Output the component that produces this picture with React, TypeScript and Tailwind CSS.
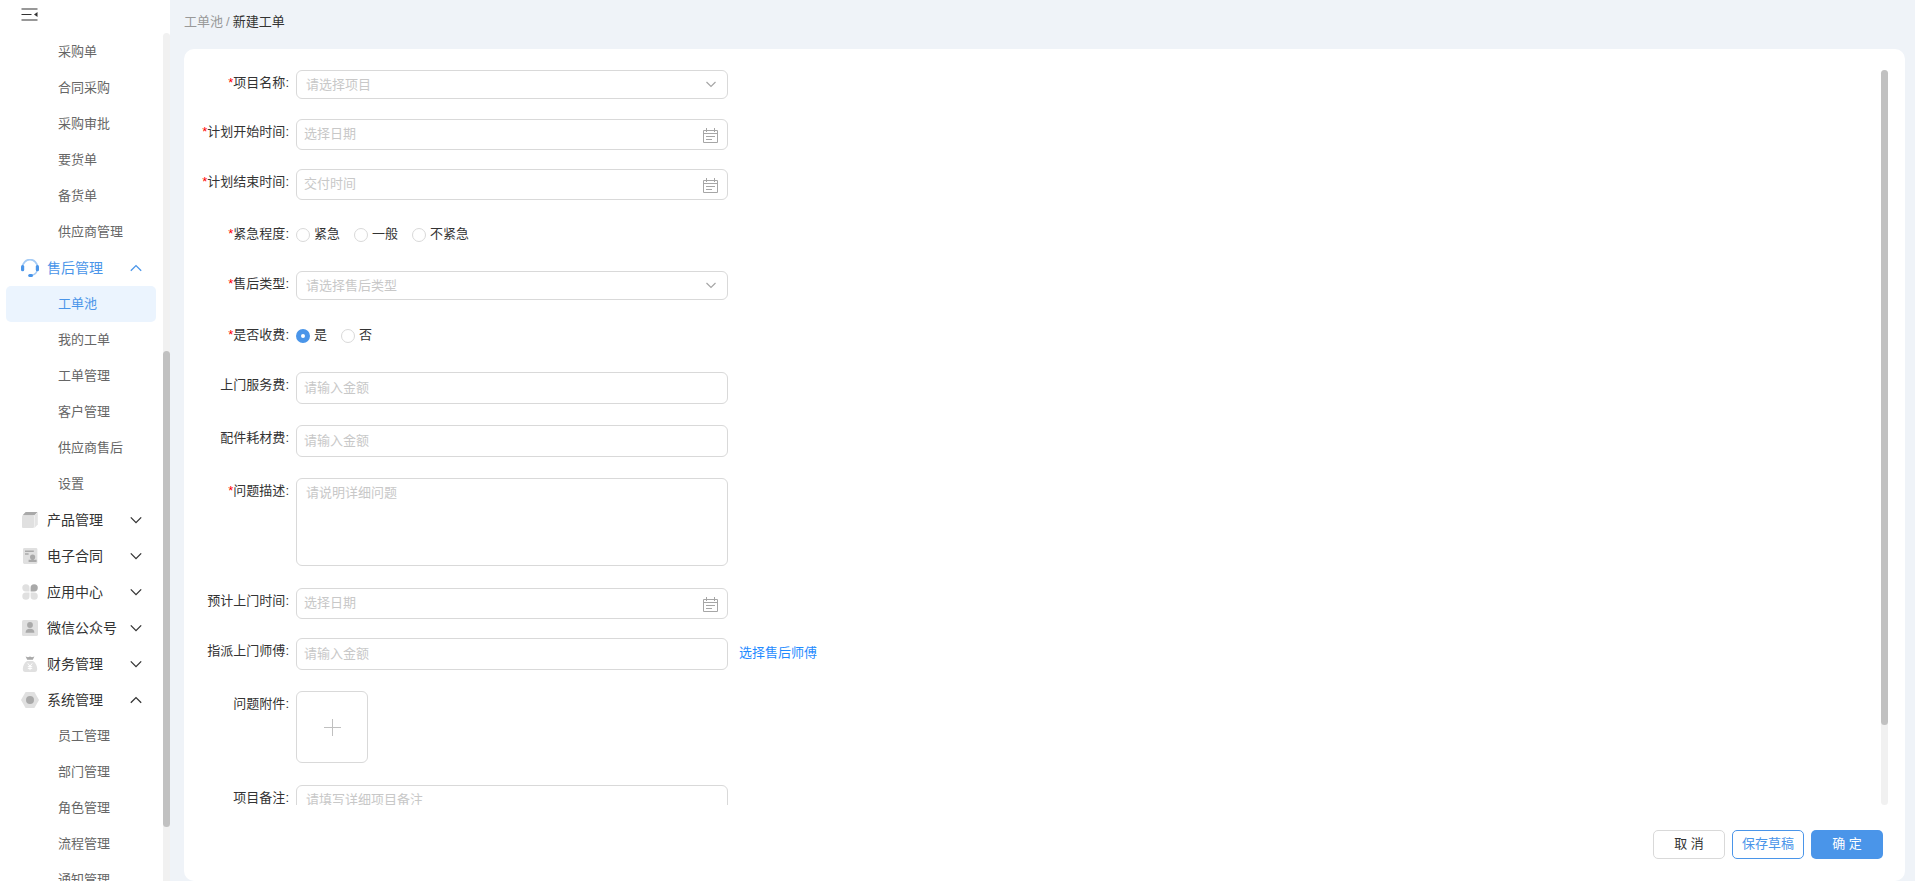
import { useState } from "react";
import type { ReactNode } from "react";

interface MenuGroup {
  name: string;
  icon?: ReactNode;
  open?: boolean;
  active?: boolean;
  children?: string[];
}

// Sidebar icons
const HeadsetIcon = () => (
  <svg width="18" height="18" viewBox="0 0 18 18" fill="none">
    <path d="M1.6 8a7.4 7.4 0 0 1 14.8 0" stroke="#a5cbf5" strokeWidth="1.8" />
    <path d="M16.2 10.5c-.4 3.2-2.6 5.4-5.7 5.9" stroke="#a5cbf5" strokeWidth="1.6" />
    <rect x="0" y="6" width="3.2" height="6.2" rx="1.5" fill="#4a95e9" />
    <rect x="14.8" y="6" width="3.2" height="6.2" rx="1.5" fill="#4a95e9" />
    <rect x="7.2" y="15" width="4.8" height="3" rx="1.5" fill="#4a95e9" />
  </svg>
);

const BoxIcon = () => (
  <svg width="18" height="18" viewBox="0 0 18 18">
    <rect x="1" y="4.6" width="12" height="12.4" rx="1" fill="#e0e0e0" />
    <path d="M13.4 4.6 16.8 1.8V13.6L13.4 17Z" fill="#e4e4e4" />
    <path d="M1.6 4.2 4.6 1h12l-3.2 3.2Z" fill="#a9a9a9" />
  </svg>
);

const ContractIcon = () => (
  <svg width="18" height="18" viewBox="0 0 18 18">
    <rect x="2" y="1" width="14.4" height="16" rx="1.4" fill="#e0e0e0" />
    <path d="M4 4.2h8.8M4 7h3.6" stroke="#a9a9a9" strokeWidth="1.5" />
    <circle cx="11.6" cy="10" r="2.6" fill="#a9a9a9" />
    <path d="M10.4 11h2.4v1.8h2.8V15H7.6v-2.2h2.8Z" fill="#a9a9a9" />
  </svg>
);

const AppsIcon = () => (
  <svg width="18" height="18" viewBox="0 0 18 18" fill="#e0e0e0">
    <path d="M4.9 1.2a3.6 3.6 0 1 0 0 7.2h3.6V4.8a3.6 3.6 0 0 0-3.6-3.6Z" />
    <path d="M13.2 1.2a3.6 3.6 0 1 1 0 7.2H9.6V4.8a3.6 3.6 0 0 1 3.6-3.6Z" fill="#a9a9a9" />
    <path d="M4.9 16.8a3.6 3.6 0 1 1 0-7.2h3.6v3.6a3.6 3.6 0 0 1-3.6 3.6Z" />
    <path d="M13.2 16.8a3.6 3.6 0 1 0 0-7.2H9.6v3.6a3.6 3.6 0 0 0 3.6 3.6Z" />
  </svg>
);

const ContactIcon = () => (
  <svg width="18" height="18" viewBox="0 0 18 18">
    <rect x="1" y="1" width="16" height="16" rx="1.6" fill="#e0e0e0" />
    <circle cx="9" cy="6" r="2.9" fill="#a9a9a9" />
    <path d="M4.6 13.8c0-2.6 1.4-4 4.4-4s4.4 1.4 4.4 4Z" fill="#a9a9a9" />
  </svg>
);

const MoneyIcon = () => (
  <svg width="18" height="18" viewBox="0 0 18 18">
    <path d="M4.6 1.6 7 2.2 9 1.6l2 .6 2.4-.6-1.6 3.2H6.2Z" fill="#a9a9a9" />
    <path d="M6 6h6c2.6 1.8 4.2 5 4.2 8 0 1.8-.8 3-2.4 3H4.2c-1.6 0-2.4-1.2-2.4-3 0-3 1.6-6.2 4.2-8Z" fill="#e0e0e0" />
    <path d="m6.8 8.4 2.2 2.8 2.2-2.8M9 11.2v4M6.8 11.6h4.4M6.8 13.4h4.4" stroke="#fff" fill="none" />
  </svg>
);

const SettingIcon = () => (
  <svg width="18" height="18" viewBox="0 0 18 18">
    <path d="M4.6 1h8.8L18 9l-4.6 8H4.6L0 9Z" fill="#e0e0e0" />
    <circle cx="9" cy="9" r="4" fill="#a9a9a9" />
  </svg>
);

const Chevron = ({ up = false }: { up?: boolean }) => (
  <svg width="12" height="8" viewBox="0 0 12 8" fill="none" stroke="currentColor" strokeWidth="1.3">
    <path d={up ? "M.8 6.8 6 1.6l5.2 5.2" : "M.8 1.4 6 6.6l5.2-5.2"} />
  </svg>
);

const CalendarIcon = () => (
  <svg width="15" height="15" viewBox="0 0 15 15" fill="none" stroke="#a6a6a6">
    <path d="M.5 2.5h14v12H.5zM.5 5.5h14M3.5 0v4M11.5 0v4M3 8.5h9M3 11.5h6" />
  </svg>
);

const menu: MenuGroup[] = [
  { name: "", children: ["采购单", "合同采购", "采购审批", "要货单", "备货单", "供应商管理"] },
  {
    name: "售后管理",
    icon: <HeadsetIcon />,
    open: true,
    active: true,
    children: ["工单池", "我的工单", "工单管理", "客户管理", "供应商售后", "设置"],
  },
  { name: "产品管理", icon: <BoxIcon /> },
  { name: "电子合同", icon: <ContractIcon /> },
  { name: "应用中心", icon: <AppsIcon /> },
  { name: "微信公众号", icon: <ContactIcon /> },
  { name: "财务管理", icon: <MoneyIcon /> },
  {
    name: "系统管理",
    icon: <SettingIcon />,
    open: true,
    children: ["员工管理", "部门管理", "角色管理", "流程管理", "通知管理"],
  },
];

const Sidebar = () => {
  const [current, setCurrent] = useState("工单池");

  return (
    <aside className="flex h-full w-[170px] shrink-0 flex-col bg-white">
      <button type="button" aria-label="收起菜单" className="h-[33px] shrink-0 pl-[21px]">
        <svg width="17" height="13" viewBox="0 0 17 13" className="-mt-1">
          <path d="M.5 1h16M.5 6.5h10M.5 12h16" stroke="#333" strokeWidth="1.2" />
          <path d="M16.5 4v5L13 6.5Z" fill="#333" />
        </svg>
      </button>
      <div className="flex min-h-0 flex-1">
        <nav className="flex-1 overflow-hidden pt-px">
          {menu.map((group) => (
            <div key={group.name}>
              {group.name && (
                <button
                  type="button"
                  className={`flex h-9 w-full items-center pl-[21px] text-sm ${
                    group.active ? "text-[#4a95e9]" : "text-[#333]"
                  }`}
                >
                  {group.icon}
                  <span className="ml-2 w-[83px] text-left whitespace-nowrap">{group.name}</span>
                  <Chevron up={group.open} />
                </button>
              )}
              {group.children?.map((item) => (
                <a
                  key={item}
                  href="#"
                  onClick={() => setCurrent(item)}
                  className={`mr-[7px] ml-1.5 flex h-9 items-center rounded-[5px] pl-[52px] ${
                    current === item ? "bg-[#ebf4fe] text-[#4a95e9]" : "text-[#666]"
                  }`}
                >
                  {item}
                </a>
              ))}
            </div>
          ))}
        </nav>
        {/* Scrollbar */}
        <div className="flex w-[7px] flex-col rounded-t bg-[#f1f1f1]">
          <div className="mt-[318px] h-[476px] rounded bg-[#c1c1c1]" />
        </div>
      </div>
    </aside>
  );
};

type Kind = "select" | "date" | "radio" | "input" | "textarea" | "upload";

interface Field {
  id: string;
  label: string;
  kind: Kind;
  required?: boolean;
  placeholder?: string;
  options?: string[];
  checked?: string;
  link?: string;
}

const fields: Field[] = [
  { id: "project", label: "项目名称", kind: "select", required: true, placeholder: "请选择项目" },
  { id: "start", label: "计划开始时间", kind: "date", required: true, placeholder: "选择日期" },
  { id: "end", label: "计划结束时间", kind: "date", required: true, placeholder: "交付时间" },
  { id: "urgency", label: "紧急程度", kind: "radio", required: true, options: ["紧急", "一般", "不紧急"] },
  { id: "type", label: "售后类型", kind: "select", required: true, placeholder: "请选择售后类型" },
  { id: "charge", label: "是否收费", kind: "radio", required: true, options: ["是", "否"], checked: "是" },
  { id: "serviceFee", label: "上门服务费", kind: "input", placeholder: "请输入金额" },
  { id: "partsFee", label: "配件耗材费", kind: "input", placeholder: "请输入金额" },
  { id: "description", label: "问题描述", kind: "textarea", required: true, placeholder: "请说明详细问题" },
  { id: "visitTime", label: "预计上门时间", kind: "date", placeholder: "选择日期" },
  { id: "worker", label: "指派上门师傅", kind: "input", placeholder: "请输入金额", link: "选择售后师傅" },
  { id: "attachment", label: "问题附件", kind: "upload" },
  { id: "remark", label: "项目备注", kind: "textarea", placeholder: "请填写详细项目备注" },
];

// Spacing under each kind of control
const rowSpace: Record<Kind, string> = {
  select: "pb-5",
  date: "pb-[19px]",
  radio: "pb-[22px]",
  input: "pb-[21px]",
  textarea: "pb-[22px]",
  upload: "pb-[22px]",
};

const box = "block w-full rounded-md border border-[#d9d9d9] bg-white outline-none placeholder:text-[#c8c8c8]";

const Control = ({ field }: { field: Field }) => {
  switch (field.kind) {
    case "select":
      return (
        <div className="relative">
          <select id={field.id} className={`${box} h-[29px] appearance-none px-[9px] text-[#c8c8c8]`}>
            <option>{field.placeholder}</option>
          </select>
          <span className="pointer-events-none absolute inset-y-0 right-3 flex items-center text-[#a6a6a6]">
            <svg width="10" height="7" viewBox="0 0 10 7" fill="none" stroke="currentColor" strokeWidth="1.2">
              <path d="M.5 1 5 5.5 9.5 1" />
            </svg>
          </span>
        </div>
      );
    case "date":
      return (
        <div className="relative">
          <input id={field.id} type="text" placeholder={field.placeholder} className={`${box} h-[31px] px-[7px] pb-0.5`} />
          <span className="pointer-events-none absolute inset-y-0 right-2.5 flex items-center pt-px">
            <CalendarIcon />
          </span>
        </div>
      );
    case "radio":
      return (
        <div className="flex h-[30px] items-center gap-3.5">
          {field.options?.map((option) => (
            <label key={option} className="flex items-center gap-1">
              <input
                type="radio"
                name={field.id}
                defaultChecked={option === field.checked}
                className="mt-0.5 size-3.5 appearance-none rounded-full border border-[#d9d9d9] bg-white checked:border-5 checked:border-[#4a95e9]"
              />
              {option}
            </label>
          ))}
        </div>
      );
    case "textarea":
      return (
        <textarea
          id={field.id}
          placeholder={field.placeholder}
          className={`${box} h-[88px] resize-none px-[9px] py-1`}
        />
      );
    case "upload":
      return (
        <button
          id={field.id}
          type="button"
          aria-label="上传附件"
          className="flex size-[72px] items-center justify-center rounded-md border border-[#d9d9d9]"
        >
          <svg width="17" height="17" viewBox="0 0 17 17" stroke="#c0c0c0">
            <path d="M8.5 0v17M0 8.5h17" />
          </svg>
        </button>
      );
    default:
      return (
        <input id={field.id} type="text" placeholder={field.placeholder} className={`${box} h-8 px-[7px] pb-0.5`} />
      );
  }
};

const FormRow = ({ field }: { field: Field }) => {
  const Label = field.kind === "radio" ? "span" : "label";

  return (
    <div className={`flex items-start ${rowSpace[field.kind]}`}>
      <Label
        {...(field.kind === "radio" ? {} : { htmlFor: field.id })}
        className={`w-[105px] shrink-0 pr-[7px] text-right whitespace-nowrap ${
          field.kind === "radio" ? "leading-[30px]" : "leading-[26px]"
        }`}
      >
        {field.required && <span className="text-[#f00]">*</span>}
        {field.label}:
      </Label>
      <div className="w-[432px]">
        <Control field={field} />
      </div>
      {field.link && (
        <a href="#" className="ml-[11px] leading-[30px] text-[#1f8bff]">
          {field.link}
        </a>
      )}
    </div>
  );
};

export default function App() {
  return (
    <div className="flex h-screen overflow-hidden bg-[#eff3f8] font-['Liberation_Sans','Noto_Sans_CJK_SC',sans-serif] text-[13px] leading-5 text-[#333]">
      <Sidebar />
      <main className="flex min-w-0 flex-1 flex-col pr-2.5 pl-3.5">
        <header className="flex h-[49px] shrink-0 items-start pt-3">
          <a href="#" className="text-[#999]">
            工单池
          </a>
          <span className="px-[3px] text-[#999]">/</span>
          <span>新建工单</span>
        </header>
        <form className="flex min-h-0 flex-1 flex-col rounded-[10px] bg-white pt-[21px] pb-[22px]">
          <div className="flex min-h-0 flex-1 pr-[17px]">
            <div className="flex-1 overflow-hidden pl-[7px]">
              {fields.map((field) => (
                <FormRow key={field.id} field={field} />
              ))}
            </div>
            {/* Scrollbar */}
            <div className="w-[7px] rounded bg-[#f1f1f1]">
              <div className="h-[655px] rounded bg-[#c1c1c1]" />
            </div>
          </div>
          <div className="flex shrink-0 justify-end gap-[7px] pt-[25px] pr-[22px]">
            <button type="button" className="h-[29px] w-[72px] rounded-[5px] border border-[#d9d9d9] pb-0.5">
              取 消
            </button>
            <button
              type="button"
              className="h-[29px] w-[72px] rounded-[5px] border border-[#4a95e9] pb-0.5 text-[#4a95e9]"
            >
              保存草稿
            </button>
            <button type="submit" className="h-[29px] w-[72px] rounded-[5px] bg-[#4a95e9] pb-0.5 text-white">
              确 定
            </button>
          </div>
        </form>
      </main>
    </div>
  );
}
